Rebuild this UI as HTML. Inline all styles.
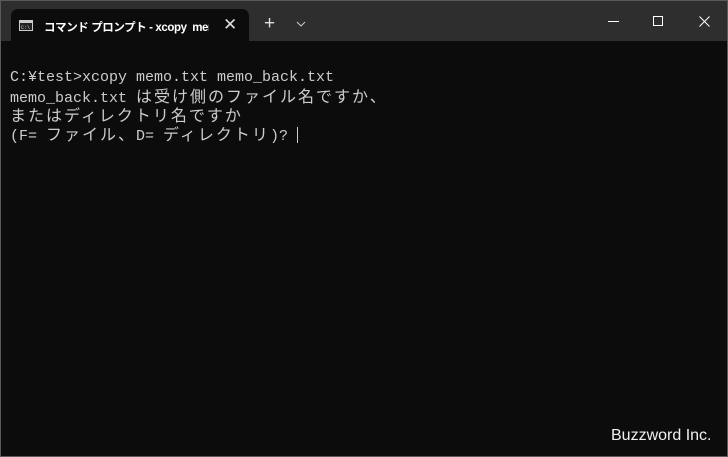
<html><head><style>
body{margin:0;width:728px;height:457px;background:#0c0c0c;overflow:hidden;position:relative;font-family:"Liberation Sans","Noto Sans CJK JP",sans-serif}
.win{position:absolute;left:0;top:0;width:726px;height:455px;border:1px solid #5a5a5a;background:#0c0c0c}
.bar{position:absolute;left:0;top:0;width:726px;height:40px;background:#2e2e2e}
.tab{position:absolute;left:10px;top:8px;width:238px;height:32px;background:#0c0c0c;border-radius:7px 7px 0 0}
.t{position:absolute;color:#fff;font-size:12px;white-space:nowrap}
.l{position:absolute;left:9px;height:19px;line-height:19px;margin:0;color:#cccccc;font-family:"Liberation Mono","Noto Sans CJK JP",monospace;font-size:15px;white-space:pre}
.j{font-family:"Noto Sans CJK JP",sans-serif;font-size:16px;letter-spacing:2px;line-height:1}
</style></head><body><div class="win">
<div class="bar"></div>
<div class="tab"></div>
<svg style="position:absolute;left:18px;top:19px" width="14" height="11"><rect x="0.5" y="0.5" width="13" height="10" fill="#222" stroke="#ccc"/><rect x="1" y="1" width="12" height="2" fill="#ccc"/><text x="2" y="9" font-size="5" fill="#ccc" font-family="Liberation Mono">C:\</text></svg>
<div class="t" style="left:43px;top:18px;width:165px;overflow:hidden;font-weight:bold;font-size:11.5px;letter-spacing:-0.4px">コマンド プロンプト - xcopy&nbsp; memo</div>
<div class="t" style="left:222px;top:14px;font-size:17px;color:#ddd">✕</div>
<div class="t" style="left:263px;top:12px;font-size:19px;color:#ddd">+</div>
<svg style="position:absolute;left:295px;top:20px" width="10" height="6"><path d="M1 1L5 5L9 1" stroke="#ccc" fill="none"/></svg>
<div style="position:absolute;left:607px;top:20px;width:11px;height:1px;background:#fff"></div>
<div style="position:absolute;left:652px;top:15px;width:8px;height:8px;border:1px solid #fff"></div>
<svg style="position:absolute;left:698px;top:15px" width="11" height="11"><path d="M0.5 0.5L10.5 10.5M10.5 0.5L0.5 10.5" stroke="#fff"/></svg>
<div class="l" style="top:67px">C:¥test&gt;xcopy memo.txt memo_back.txt</div>
<div class="l" style="top:86px">memo_back.txt <span class="j">は受け側のファイル名ですか、</span></div>
<div class="l" style="top:105px"><span class="j">またはディレクトリ名ですか</span></div>
<div class="l" style="top:124px">(F= <span class="j">ファイル、</span>D= <span class="j">ディレクトリ</span>)? <span style="display:inline-block;width:1px;height:16px;background:#ccc;vertical-align:-3px"></span></div>
<div class="t" style="left:610px;top:426px;font-size:16px;color:#f0f0f0">Buzzword Inc.</div>
</div></body></html>
